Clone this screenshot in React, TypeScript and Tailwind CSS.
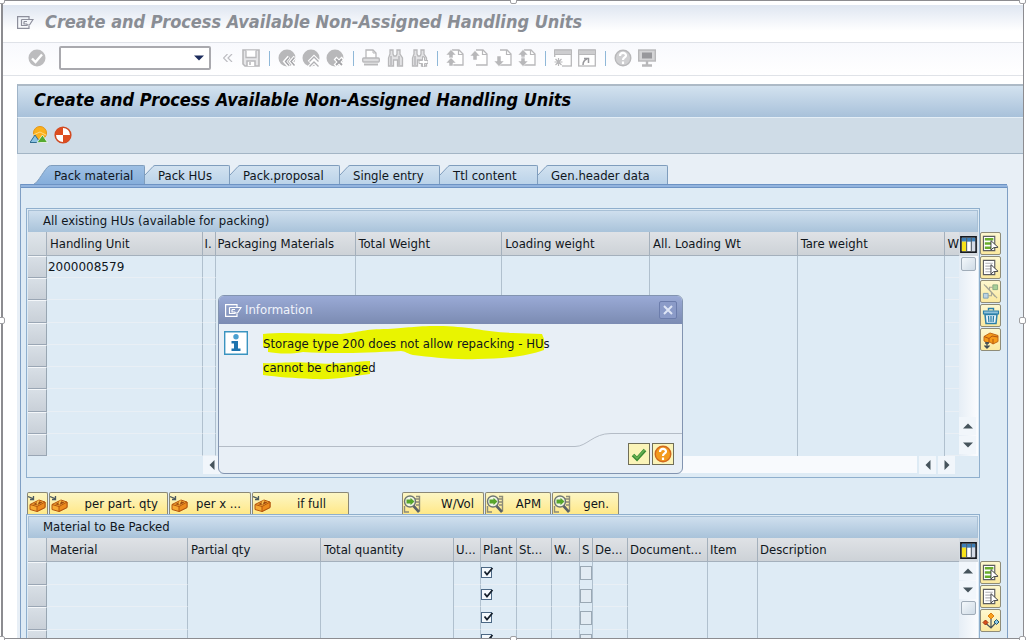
import { ReactNode } from "react";
import clsx from "clsx";

const TABS = [
  { name: "Pack material", width: "w-[111px]" },
  { name: "Pack HUs", width: "w-[85px]" },
  { name: "Pack.proposal", width: "w-[110px]" },
  { name: "Single entry", width: "w-[100px]" },
  { name: "Ttl content", width: "w-[98px]" },
  { name: "Gen.header data", width: "w-[130px]" },
];

const HU_COLUMNS = [
  { name: "Handling Unit", width: "w-[156px]", lines: true },
  { name: "I.", width: "w-[13px]", tight: true, lines: true },
  { name: "Packaging Materials", width: "w-[140px]", tight: true },
  { name: "Total Weight", width: "w-[147px]" },
  { name: "Loading weight", width: "w-[148px]" },
  { name: "All. Loading Wt", width: "w-[148px]" },
  { name: "Tare weight", width: "w-[148px]" },
  { name: "W", width: "w-auto", tight: true, lines: true },
];

const MATERIAL_COLUMNS = [
  { name: "Material", width: "w-[141px]", lines: true },
  { name: "Partial qty", width: "w-[133px]" },
  { name: "Total quantity", width: "w-[133px]" },
  { name: "U...", width: "w-[27px]", tight: true, lines: true },
  { name: "Plant", width: "w-[36px]", tight: true, lines: true },
  { name: "St...", width: "w-[35px]", tight: true, lines: true },
  { name: "W..", width: "w-[28px]", tight: true, lines: true },
  { name: "S", width: "w-[13px]", tight: true },
  { name: "De...", width: "w-[35px]", tight: true, lines: true },
  { name: "Document...", width: "w-[80px]", tight: true },
  { name: "Item", width: "w-[50px]", tight: true },
  { name: "Description", width: "w-auto", tight: true },
];

interface Column {
  name: string;
  width: string;
  tight?: boolean;
  lines?: boolean;
}

function Icon({ children, size = "size-[18px]" }: { children: ReactNode; size?: string }) {
  return (
    <svg viewBox="0 0 18 18" className={clsx("shrink-0", size)} fill="none" aria-hidden="true">
      {children}
    </svg>
  );
}

/* ---- grey icons of the system toolbar ---- */

const GREY = "#b8b8ba";

function CheckCircle() {
  return (
    <Icon>
      <circle cx="9" cy="9" r="8.5" fill="#bcbcbe" />
      <path d="M4 9.5l3.5 3.5L14 5.5" stroke="#fff" strokeWidth="2.4" />
    </Icon>
  );
}

function SaveIcon() {
  return (
    <Icon>
      <path d="M1 1h16v16H3l-2-2z" fill="#e6e6e8" stroke={GREY} strokeWidth="1.6" />
      <path d="M4 1.5v7h10v-7" fill="#fff" stroke={GREY} strokeWidth="1.3" />
      <path d="M5 17v-5h8v5M8 13v3" fill="#fff" stroke={GREY} strokeWidth="1.5" />
    </Icon>
  );
}

function BackIcon() {
  return (
    <Icon>
      <circle cx="9" cy="9" r="8.5" fill={GREY} />
      <path d="M11 8l-4 4.5 4 4.5M17 8l-4 4.5 4 4.5" stroke="#fff" strokeWidth="3.6" />
      <path d="M11 8.5L7.5 12.5l3.5 4M16.5 8.5L13 12.5l3.5 4" stroke="#a4a4a8" strokeWidth="1.4" />
    </Icon>
  );
}

function ExitIcon() {
  return (
    <Icon>
      <circle cx="9" cy="9" r="8.5" fill={GREY} />
      <path d="M7 13l5-5 5 5M7 18l5-5 5 5" stroke="#fff" strokeWidth="3.5" />
      <path d="M7.5 12.5L12 8l4.5 4.5M7.5 17.5L12 13l4.5 4.5" stroke="#b0b0b4" strokeWidth="1.3" />
    </Icon>
  );
}

function CancelIcon() {
  return (
    <Icon>
      <circle cx="9" cy="9" r="8.5" fill={GREY} />
      <path d="M9 9l8 8M17 9l-8 8" stroke="#fff" strokeWidth="4" />
      <path d="M10 10l6 6M16 10l-6 6" stroke="#a4a4a8" strokeWidth="1.8" />
    </Icon>
  );
}

function PrintIcon() {
  return (
    <Icon>
      <path d="M4 9V1h7l3 3v5" fill="#fff" stroke={GREY} strokeWidth="1.3" />
      <path d="M11 1v3h3" stroke={GREY} />
      <rect x="0.7" y="9" width="16.6" height="4" rx="1" fill="#dcdcde" stroke={GREY} strokeWidth="1.3" />
      <path d="M2 15.5h14" stroke={GREY} strokeWidth="2" />
    </Icon>
  );
}

function FindIcon({ next = false }: { next?: boolean }) {
  return (
    <Icon>
      <path d="M4 1h3v4l1 2h2l1-2V1h3v4l2.500 4v8h-5v-6h-4v6h-5V9L4 5z" fill="#e2e2e4" stroke={GREY} strokeWidth="1.3" />
      <path d="M5 7v9M13 7v9" stroke={GREY} strokeWidth="1.5" />
      {next && <path d="M12.500 8v3.500H9v3h3.500V18h2v-3.500H18v-3h-3.500V8z" fill="#fff" stroke={GREY} />}
    </Icon>
  );
}

function PageIcon({ direction }: { direction: "first" | "up" | "down" | "last" }) {
  return (
    <Icon>
      <path d="M6 1h7l4 4v11H6" fill="#fff" stroke={GREY} strokeWidth="1.3" />
      <path d="M12.5 1v4.5H17" stroke={GREY} strokeWidth="1.2" />
      {direction === "up" && <path d="M0 7L5 1.500 10 7H7v4H3V7z" fill={GREY} stroke="#fff" strokeWidth="0.5" />}
      {direction === "down" && <path d="M0 12l5 5.500L10 12H7V7H3v5z" fill={GREY} stroke="#fff" strokeWidth="0.5" />}
      {direction === "first" && (
        <path d="M0 6L5 0.500 10 6H7v3H3V6zM0 14l5-5.500L10 14H7v3H3v-3z" fill={GREY} stroke="#fff" strokeWidth="0.5" />
      )}
      {direction === "last" && (
        <path d="M0 6L5 0.500 10 6H7v3H3V6zM0 12h3V8h4v4h3l-5 5.500z" fill={GREY} stroke="#fff" strokeWidth="0.5" />
      )}
    </Icon>
  );
}

function SessionIcon({ shortcut = false }: { shortcut?: boolean }) {
  return (
    <Icon>
      <rect x="0.7" y="1" width="16.6" height="16" fill="#fff" stroke={GREY} strokeWidth="1.3" />
      <path d="M0.5 1h17v4.5H.5z" fill="#cdcdcf" stroke={GREY} />
      {shortcut ? (
        <path d="M5 16c0-3 1-5 4-6M6 9.5h4.5V14" stroke="#98989c" strokeWidth="1.5" />
      ) : (
        <>
          <path d="M0 8h8v10H0z" fill="#fff" />
          <path d="M4.5 9v8M.5 13h8M1.5 10l6 6M7.5 10l-6 6" stroke={GREY} strokeWidth="1.2" />
        </>
      )}
    </Icon>
  );
}

function HelpIcon({ active = false }: { active?: boolean }) {
  return (
    <Icon>
      <circle cx="9" cy="9" r="7.8" fill={active ? "#f39a1e" : "#d0d0d2"} stroke={active ? "#d2691e" : GREY} strokeWidth="1.4" />
      <path d="M6 7c0-4 6-4 6-.5 0 2-3 2-3 4.5M9 12.5V15" stroke="#fff" strokeWidth="2.2" />
    </Icon>
  );
}

function MonitorIcon() {
  return (
    <Icon>
      <rect x="0.7" y="1" width="16.6" height="11" fill="#d4d4d6" stroke={GREY} strokeWidth="1.4" />
      <path d="M4 3.5h10v6H4z" fill="#98989c" />
      <path d="M9 12v4M4 16.5h10" stroke={GREY} strokeWidth="2.4" />
    </Icon>
  );
}

function WindowIcon({ className }: { className: string }) {
  return (
    <svg viewBox="0 0 17 13" className={clsx("h-[13px] w-[17px] shrink-0", className)} fill="none" stroke="currentColor" strokeWidth="1.2" aria-hidden="true">
      <path d="M12 3V.6H.6v11.8H12V10" />
      <path d="M4.5 3.5h7M4.5 3.5v6h5c1 0 1-1.5 0-1.5M7 5.5h3M7 5.5V8h3M11 3.500h5L12.5 9H9.5" />
    </svg>
  );
}

/* ---- coloured icons ---- */

function SelectIcon({ all = false }: { all?: boolean }) {
  return (
    <Icon size="size-[17px]">
      <path d="M1.5 1.5h12v15h-12z" fill="#fff" stroke="#5d5d60" strokeWidth="1.2" />
      {all ? (
        <path d="M3 4.500h9M3 9h9M3 13.5h9" stroke="#69ad2c" strokeWidth="2.8" />
      ) : (
        <path d="M3.5 4.5h8M3.5 7.5h8M3.5 10.5h6M3.5 13.5h6" stroke="#b4b4b8" strokeWidth="1.3" />
      )}
      <path d="M9.5 6v10l2.5-2.5L17 13z" fill="#fff" stroke="#3c3c40" />
    </Icon>
  );
}

function UnlinkIcon() {
  return (
    <Icon size="size-[17px]">
      <path d="M1.5 11h5v5h-5z" fill="#bcd4e2" stroke="#7d9fb4" />
      <path d="M11.5 2h5v5h-5z" fill="#a8d098" stroke="#86aa80" />
      <path d="M6.5 13.5H10v-3M11.5 4.5H8v3M4 3l12 13M2 1.5l12 13" stroke="#a7a795" strokeWidth="1.1" />
    </Icon>
  );
}

function TrashIcon() {
  return (
    <Icon>
      <path d="M6.5 3.5V1.5h5v2" stroke="#2c7fa8" strokeWidth="1.4" />
      <path d="M1.5 4h15v3h-15z" fill="#8fc2dc" stroke="#2c7fa8" strokeWidth="1.2" />
      <path d="M3 7.5h12l-1 9H4z" fill="#e8f4fa" stroke="#2c7fa8" strokeWidth="1.5" />
      <path d="M6.5 9l.4 6M9 9v6M11.5 9l-.4 6" stroke="#2c7fa8" strokeWidth="1.3" />
    </Icon>
  );
}

function UnpackIcon() {
  return (
    <Icon>
      <path d="M2 5.500L8 2l8 2.500v6L11 13l-3-2-2 1-4-2z" fill="#f59a1a" stroke="#c46a16" />
      <path d="M2 5.500l5 2 3-2.500 6 1M7 7.500V11M11 8v5" stroke="#b4560f" />
      <path d="M5 11v6M2.5 14.5L5 17l2.500-2.500M3 12h4" stroke="#3f4a52" strokeWidth="1.4" />
    </Icon>
  );
}

function PackIcon() {
  return (
    <Icon>
      <path d="M2 9.500L11 5l6 2v5.500L9 16.500 2 14.500z" fill="#f6a832" stroke="#b4560f" />
      <path d="M2 9.500l7 2 8-4.500v5.500L9 16.500v-5" fill="#ec8a1c" stroke="#b4560f" />
      <path d="M5 9.300l6-3 3.500 1.200L9 10.300z" fill="#9c4a10" />
      <path d="M10.500 5.500L9 9.500" stroke="#f9c050" strokeWidth="1.500" />
      <path d="M0 1.500l5 2M5.500 1v3.500H2" stroke="#4b5a60" strokeWidth="1.3" />
    </Icon>
  );
}

function ZoomIcon() {
  return (
    <Icon>
      <path d="M13 1.5h3.5v15M1.5 11v6H6M12 4h4M12 7h4M13 10h3" stroke="#8c8b78" strokeWidth="1.4" />
      <circle cx="7" cy="6.5" r="5.5" fill="#f2f7e6" stroke="#6f7672" strokeWidth="1.4" />
      <path d="M3.5 4.5h4V2.800l4 3.700-4 3.700V8.5h-4z" fill="#58a52c" />
      <path d="M10.5 11l5.5 6" stroke="#5a6266" strokeWidth="2.6" />
    </Icon>
  );
}

function HierarchyIcon() {
  return (
    <Icon>
      <path d="M9 7v9M3.5 11L9 16l5.5-6" stroke="#46525a" strokeWidth="1.2" />
      <path d="M9 1l3 3-3 3-3-3z" fill="#f9a11c" stroke="#d97c12" />
      <path d="M3.5 8L6 10.5 3.5 13 1 10.500z" fill="#d94f1c" stroke="#9c3510" />
      <path d="M14.5 7.5L17 10l-2.5 2.5L12 10z" fill="#8cc8e6" stroke="#24586e" />
    </Icon>
  );
}

function ConfigIcon() {
  return (
    <Icon size="size-[17px]">
      <path d="M1 1h16v16H1z" fill="#fff" stroke="#161a20" strokeWidth="1.8" />
      <path d="M2 2h14v4H2z" fill="#3c7fb8" />
      <path d="M2 6h5v10H2z" fill="#f8e21a" />
      <path d="M12 6h4v10h-4z" fill="#d4dbe6" />
      <path d="M7 2v14M12 2v14" stroke="#54606c" strokeWidth="1.2" />
    </Icon>
  );
}

const ARROWS = {
  up: "M0 7.5L5 2.5l5 5z",
  down: "M0 2.5h10L5 7.5z",
  left: "M7.5 0v10L2.5 5z",
  right: "M2.5 0v10l5-5z",
};

function ScrollButton({ direction }: { direction: keyof typeof ARROWS }) {
  return (
    <button aria-label={`Scroll ${direction}`} className="flex h-[18px] w-[17px] shrink-0 items-center justify-center bg-[#f1f6fb]">
      <svg viewBox="0 0 10 10" className="size-[10px]" aria-hidden="true">
        <path d={ARROWS[direction]} fill="#46545c" />
      </svg>
    </button>
  );
}

function ScrollThumb() {
  return <div className="mx-auto h-[14px] w-[15px] shrink-0 rounded-xs border border-[#a0acb8] bg-linear-to-br from-[#f4f8fb] to-[#cfdbe6]" />;
}

function ToolButton({ label, children }: { label: string; children: ReactNode }) {
  return (
    <button aria-label={label} className="shrink-0">
      {children}
    </button>
  );
}

function Separator() {
  return (
    <div className="flex w-[6px] shrink-0 justify-center">
      <div className="h-[15px] w-px bg-[#8fb8d8]" />
    </div>
  );
}

function SideButton({ label, children }: { label: string; children: ReactNode }) {
  return (
    <button
      aria-label={label}
      className="flex h-[23px] w-[21px] items-center justify-center rounded-xs border border-[#8f8c78] bg-linear-to-b from-[#fdf8cf] to-[#fbe9a0]"
    >
      {children}
    </button>
  );
}

function ActionButton({ icon, label, className }: { icon: ReactNode; label?: string; className: string }) {
  return (
    <button
      aria-label={label ? undefined : "Pack"}
      className={clsx(
        "flex h-[22px] items-center justify-between rounded-t-xs border border-b-0 border-[#8b8876] bg-linear-to-b from-[#fcf6c4] to-[#ffe887] whitespace-nowrap",
        className
      )}
    >
      {icon}
      {label && <span>{label}</span>}
    </button>
  );
}

function Tab({ name, width, active }: { name: string; width: string; active: boolean }) {
  const id = active ? "tab-on" : "tab-off";
  return (
    <button role="tab" aria-selected={active} className={clsx("flex h-[19px] shrink-0", width)}>
      <svg viewBox={active ? "0 0 18 19" : "0 0 10 19"} className={clsx("h-[19px] shrink-0", active ? "w-[18px]" : "w-[10px]")} fill="none" aria-hidden="true">
        <defs>
          <linearGradient id={id} x1="0" y1="0" x2="0" y2="1">
            <stop offset="0" stopColor={active ? "#9dbfe4" : "#d2e2f0"} />
            <stop offset="1" stopColor={active ? "#86aedb" : "#bbd3e9"} />
          </linearGradient>
        </defs>
        <path d={active ? "M0 19C4 18 11 3 15 1Q16 .5 18 .5V19z" : "M0 19V10L8 1.5Q9 .5 10 .5V19z"} fill={`url(#${id})`} />
        <path d={active ? "M0 19C4 18 11 3 15 1Q16 .5 18 .5" : "M0 10L8 1.5Q9 .5 10 .5"} stroke="#7f9dbd" />
      </svg>
      <span
        className={clsx(
          "h-full flex-1 rounded-tr-xs border-t border-r border-[#7f9dbd] bg-linear-to-b pt-px text-left leading-[18px] whitespace-nowrap",
          active ? "from-[#9dbfe4] to-[#86aedb] pl-[2px]" : "from-[#d2e2f0] to-[#bbd3e9] pl-[3px]"
        )}
      >
        {name}
      </span>
    </button>
  );
}

function GridTable({
  label,
  columns,
  rows,
  className,
  renderCell,
}: {
  label: string;
  columns: Column[];
  rows: number;
  className: string;
  renderCell: (column: string, row: number) => ReactNode;
}) {
  return (
    <table aria-label={label} className={clsx("min-w-0 flex-1 table-fixed border-separate border-spacing-0", className)}>
      <thead>
        <tr className="h-[24px]">
          <th aria-label="Select" className="w-[19px] border-r border-b border-[#a4b0bc] bg-linear-to-b from-[#dfe5ea] to-[#d0d7dd] p-0" />
          {columns.map((column, index) => (
            <th
              key={column.name}
              className={clsx(
                "overflow-hidden border-b border-[#a4b0bc] bg-linear-to-b from-[#dfe2e6] to-[#cdd2d7] py-0 pr-0 text-left font-normal whitespace-nowrap",
                column.width,
                column.tight ? "pl-[2px]" : "pl-[3px]",
                index < columns.length - 1 && "border-r"
              )}
            >
              {column.name}
            </th>
          ))}
        </tr>
      </thead>
      <tbody>
        {[...Array(rows)].map((_, row) => (
          <tr key={row} className="h-[22px]">
            <td className="border-t border-r border-b border-t-[#f4f7fa] border-r-[#98a6b2] border-b-[#9aa6b4] bg-linear-to-b from-[#d8dfe6] to-[#c9d0d8] p-0" />
            {columns.map((column, index) => (
              <td
                key={column.name}
                className={clsx(
                  "border-[#b0c0ce] p-0",
                  index < columns.length - 1 && "border-r",
                  column.lines && "border-b border-b-[#e9eff5]"
                )}
              >
                {renderCell(column.name, row)}
              </td>
            ))}
          </tr>
        ))}
      </tbody>
    </table>
  );
}

function GroupBox({ title, className, children }: { title: string; className?: string; children: ReactNode }) {
  return (
    <section className={clsx("min-w-0 flex-1 border border-[#8fafcd] p-px", className)}>
      <h2 className="h-[22px] border border-b-0 border-[#a8c0d6] bg-linear-to-b from-[#cfdfee] to-[#a9c3da] pl-[14px] leading-[20px]">
        {title}
      </h2>
      {children}
    </section>
  );
}

function PlantCheck({ row }: { row: number }) {
  return (
    <label className="relative block size-[12px]">
      <input
        type="checkbox"
        defaultChecked
        aria-label={`Plant, row ${row + 1}`}
        className="peer block size-[11px] appearance-none border border-[#4c6884] bg-[#f4f9fd]"
      />
      <svg viewBox="0 0 12 12" className="absolute top-0 left-px hidden size-[12px] peer-checked:block" fill="none" aria-hidden="true">
        <path d="M2.5 4.5L5 7.5 10.5 1" stroke="#16202c" strokeWidth="1.8" />
      </svg>
    </label>
  );
}

function InformationDialog() {
  return (
    <div
      role="dialog"
      aria-labelledby="dialog-title"
      className="absolute top-[295px] left-[218px] flex h-[179px] w-[465px] flex-col overflow-hidden rounded-md border border-[#8294b0] bg-[#e8eff6]"
    >
      <div className="flex h-[28px] shrink-0 items-center gap-[3px] bg-linear-to-b from-[#9aaad6] to-[#7b8bb2] pr-[5px] pl-[6px] text-white">
        <WindowIcon className="text-white" />
        <h2 id="dialog-title" className="flex-1 text-[#f0f3fb]">Information</h2>
        <button aria-label="Close" className="flex size-[18px] items-center justify-center rounded-xs border border-[#6c7dac] bg-[#8b9bc8]">
          <svg viewBox="0 0 10 10" className="size-[10px]" aria-hidden="true">
            <path d="M1 1l8 8M9 1L1 9" stroke="#dfe6f6" strokeWidth="2" />
          </svg>
        </button>
      </div>
      <div className="flex flex-1 gap-[15px] pt-[7px] pl-[5px]">
        <svg viewBox="0 0 24 24" className="size-[24px] shrink-0" aria-hidden="true">
          <path d="M.7.7h22.600v22.600H.7z" fill="#fff" stroke="#3a94c0" strokeWidth="1.4" />
          <circle cx="12" cy="5.8" r="2.7" fill="#4aa0d0" />
          <path d="M7.5 10h6.5v7.5h2.5V20h-9v-2.5H10v-5H7.5z" fill="#1f74ae" />
        </svg>
        <div className="relative">
          <svg viewBox="0 0 282 56" className="absolute top-[-6px] left-0 h-[56px] w-[282px]" aria-hidden="true">
            <path
              d="M0 9C20 7 50 9 78 9C98 7 100 4 125 4C145 3 150 1 175 1C205 1 222 7 250 8L279 9L281 14L281 25C265 31 240 34 215 34C185 35 170 32 150 30C145 29 142 26 138 26C100 28 70 29 40 27C25 30 12 28 5 27L5 23L0 22Z"
              fill="#e9f400"
            />
            <path d="M0 38C15 39 25 36 50 38C75 40 85 37 107 36L107 49C90 51 75 55 50 54C30 53 15 52 0 50Z" fill="#e9f400" />
          </svg>
          <p className="relative pt-px leading-[24px] whitespace-nowrap">
            Storage type 200 does not allow repacking - HUs
            <br />
            cannot be changed
          </p>
        </div>
      </div>
      <div className="flex h-[40px] shrink-0">
        <div className="mt-[13px] flex-1 border-t border-[#b4bcc6]" />
        <svg viewBox="0 0 36 14" className="h-[14px] w-[36px] shrink-0" fill="none" aria-hidden="true">
          <path d="M0 13.5C12 13.5 18 .5 36 .5" stroke="#b4bcc6" />
        </svg>
        <div className="flex gap-[2px] border-t border-[#b4bcc6] pt-[9px] pr-[8px] pl-[17px]">
          <button aria-label="Continue" className="flex size-[22px] items-center justify-center border border-[#706e58] bg-[#fbf4b8]">
            <svg viewBox="0 0 16 16" className="size-[16px]" fill="none" aria-hidden="true">
              <path d="M2 9l4 4L14 4" stroke="#3b8a34" strokeWidth="3.6" />
              <path d="M2.5 9L6 12.3 13.5 4" stroke="#66b052" strokeWidth="1.6" />
            </svg>
          </button>
          <button aria-label="Help" className="flex size-[22px] items-center justify-center border border-[#706e58] bg-[#fbf4b8]">
            <HelpIcon active />
          </button>
        </div>
      </div>
    </div>
  );
}

function Handle({ className }: { className: string }) {
  return <div className={clsx("absolute size-[7px] rounded-xs border border-[#a0a0a4] bg-white", className)} />;
}

export default function App() {
  return (
    <div className="relative h-screen overflow-hidden bg-white pr-[3px] pb-px pl-px font-['DejaVu_Sans_Condensed','DejaVu_Sans',sans-serif] text-[13px] leading-[16px] text-[#10161c]">
      <div className="flex h-full flex-col overflow-hidden border-y border-r border-l-2 border-[#8c8c90] pt-[4px]">
        <header className="flex h-[38px] shrink-0 items-center gap-[11px] border-b border-[#dfe2e8] bg-linear-to-b from-[#dfe6f1] to-white to-70% pb-[3px] pl-[14px]">
          <WindowIcon className="text-[#8d8f9c]" />
          <h1 className="text-[18px] leading-[24px] font-bold whitespace-nowrap text-[#898d94] italic">
            Create and Process Available Non-Assigned Handling Units
          </h1>
        </header>

        <div className="flex h-[33px] shrink-0 items-center gap-[6px] border-b border-[#e0e3e8] bg-linear-to-b from-[#f8f9fd] to-white pb-[2px] pl-[25px]">
          <ToolButton label="Enter"><CheckCircle /></ToolButton>
          <div className="relative mr-[3px] ml-[7px] w-[152px]">
            <input aria-label="Command" className="block h-[24px] w-full rounded-xs border-2 border-[#a9a9ae] bg-white px-1" />
            <svg viewBox="0 0 10 6" className="absolute top-[9px] right-[7px] h-[6px] w-[10px]" aria-hidden="true">
              <path d="M0 .5h10L5 5.5z" fill="#1c2c5c" />
            </svg>
          </div>
          <button aria-label="Collapse" className="flex w-[16px] shrink-0 justify-center text-[#bdbdc2]">
            <svg viewBox="0 0 10 8" className="h-[8px] w-[10px]" fill="none" stroke="currentColor" aria-hidden="true">
              <path d="M4.5 0l-4 4 4 4M9 0L5 4l4 4" strokeWidth="1.2" />
            </svg>
          </button>
          <ToolButton label="Save"><SaveIcon /></ToolButton>
          <Separator />
          <ToolButton label="Back"><BackIcon /></ToolButton>
          <ToolButton label="Exit"><ExitIcon /></ToolButton>
          <ToolButton label="Cancel"><CancelIcon /></ToolButton>
          <Separator />
          <ToolButton label="Print"><PrintIcon /></ToolButton>
          <ToolButton label="Find"><FindIcon /></ToolButton>
          <ToolButton label="Find next"><FindIcon next /></ToolButton>
          <Separator />
          <ToolButton label="First page"><PageIcon direction="first" /></ToolButton>
          <ToolButton label="Previous page"><PageIcon direction="up" /></ToolButton>
          <ToolButton label="Next page"><PageIcon direction="down" /></ToolButton>
          <ToolButton label="Last page"><PageIcon direction="last" /></ToolButton>
          <Separator />
          <ToolButton label="New session"><SessionIcon /></ToolButton>
          <ToolButton label="Create shortcut"><SessionIcon shortcut /></ToolButton>
          <Separator />
          <ToolButton label="Help"><HelpIcon /></ToolButton>
          <ToolButton label="Customize layout"><MonitorIcon /></ToolButton>
        </div>

        <main className="mt-[8px] ml-[14px] flex min-h-0 flex-1 flex-col bg-[#e8eff6]">
          <div className="flex h-[34px] shrink-0 items-center border-t-2 border-b border-l border-t-[#adbac6] border-b-[#e4eef6] border-l-[#9fb4c8] bg-linear-to-b from-[#d3e2ef] to-[#a8c1da] pb-[3px] pl-[16px]">
            <h2 className="text-[18px] leading-[24px] font-bold whitespace-nowrap text-black italic">
              Create and Process Available Non-Assigned Handling Units
            </h2>
          </div>
          <div className="flex h-[36px] shrink-0 items-center gap-[6px] border-b border-l border-b-[#a3b5c5] border-l-[#9fb4c8] bg-[#cfdce7] pb-[2px] pl-[12px]">
            <ToolButton label="Header data">
              <Icon>
                <circle cx="10" cy="7" r="6.5" fill="#fbb01c" stroke="#e59512" />
                <path d="M0 16.5L5 9l5 7.5z" fill="#8cc2e2" stroke="#2f6c90" />
                <path d="M7 16.5L12.5 9l5 7.500z" fill="#55aa30" stroke="#fff" strokeWidth="0.7" />
                <path d="M3 9l7-3 6 3" stroke="#fde3a0" strokeWidth="0.8" />
              </Icon>
            </ToolButton>
            <ToolButton label="Overview">
              <Icon>
                <circle cx="9" cy="9" r="7.8" fill="#fff" stroke="#cf4a22" strokeWidth="1.6" />
                <path d="M9 9V1.200A7.800 7.800 0 0 0 1.200 9zM9 9v7.800A7.800 7.800 0 0 0 16.800 9z" fill="#dd4d20" />
              </Icon>
            </ToolButton>
          </div>

          <div role="tablist" className="mt-[11px] flex shrink-0 pl-[17px]">
            {TABS.map((tab, index) => (
              <Tab key={tab.name} name={tab.name} width={tab.width} active={index === 0} />
            ))}
          </div>

          <div className="mr-[15px] ml-[3px] flex min-h-0 flex-1 flex-col rounded-tr-sm border-x border-[#7f9fc4] bg-[#deebf5]">
            <div className="h-[4px] shrink-0 border-y border-[#6d93c4] bg-[#93b4de]" />

            <div className="flex shrink-0 pt-[20px] pr-[6px] pl-[5px]">
              <GroupBox title="All existing HUs (available for packing)">
                <div className="flex">
                  <GridTable
                    label="Existing handling units"
                    columns={HU_COLUMNS}
                    rows={9}
                    className="h-[224px]"
                    renderCell={(column, row) =>
                      column === "Handling Unit" && row === 0 ? (
                        <span className="block pl-px font-['DejaVu_Sans',sans-serif] text-[12px] leading-[20px]">2000008579</span>
                      ) : null
                    }
                  />
                  <div className="flex w-[19px] shrink-0 flex-col bg-linear-to-r from-[#e6eef6] to-[#fbfcfe]">
                    <button aria-label="Table settings" className="flex h-[24px] shrink-0 items-center justify-center bg-[#d5dbe1]">
                      <ConfigIcon />
                    </button>
                    <div className="h-px" />
                    <ScrollThumb />
                    <div className="flex-1" />
                    <div className="flex flex-col gap-px pb-[2px]">
                      <ScrollButton direction="up" />
                      <ScrollButton direction="down" />
                    </div>
                  </div>
                </div>
                <div className="flex h-[20px] gap-[2px] pr-[23px] pl-[175px]">
                  <ScrollButton direction="left" />
                  <div className="h-[17px] flex-1 bg-[#f8fafd] pl-[23px]">
                    <div className="h-[18px] w-[20px] rounded-xs border border-[#a0acb8] bg-[#d3dee8]" />
                  </div>
                  <ScrollButton direction="left" />
                  <ScrollButton direction="right" />
                </div>
              </GroupBox>
              <div className="flex w-[21px] shrink-0 flex-col gap-px pt-[24px]">
                <SideButton label="Select all"><SelectIcon all /></SideButton>
                <SideButton label="Deselect all"><SelectIcon /></SideButton>
                <SideButton label="Remove assignment"><UnlinkIcon /></SideButton>
                <SideButton label="Delete"><TrashIcon /></SideButton>
                <SideButton label="Empty"><UnpackIcon /></SideButton>
              </div>
            </div>

            <div className="mt-[14px] flex shrink-0 gap-px pl-[6px]">
              <ActionButton icon={<PackIcon />} className="w-[21px]" />
              <ActionButton icon={<PackIcon />} label="per part. qty" className="w-[119px] pr-[9px]" />
              <ActionButton icon={<PackIcon />} label="per x ..." className="w-[82px] pr-[9px]" />
              <ActionButton icon={<PackIcon />} label="if full" className="mr-[52px] w-[97px] pr-[22px]" />
              <ActionButton icon={<ZoomIcon />} label="W/Vol" className="w-[82px] pr-[9px]" />
              <ActionButton icon={<ZoomIcon />} label="APM" className="w-[66px] pr-[9px]" />
              <ActionButton icon={<ZoomIcon />} label="gen." className="w-[67px] pr-[9px]" />
            </div>

            <div className="flex min-h-0 flex-1 pr-[6px] pl-[5px]">
              <GroupBox title="Material to Be Packed" className="border-b-0">
                <div className="flex">
                  <GridTable
                    label="Material to be packed"
                    columns={MATERIAL_COLUMNS}
                    rows={4}
                    className="h-[114px]"
                    renderCell={(column, row) => {
                      if (column === "Plant") return <PlantCheck row={row} />;
                      if (column === "S")
                        return (
                          <input
                            type="checkbox"
                            aria-label={`S, row ${row + 1}`}
                            className="block h-[14px] w-[12px] appearance-none border border-[#9aa8b4] bg-[#e2ebf3]"
                          />
                        );
                      return null;
                    }}
                  />
                  <div className="flex w-[19px] shrink-0 flex-col bg-linear-to-r from-[#e6eef6] to-[#fbfcfe]">
                    <button aria-label="Table settings" className="flex h-[24px] shrink-0 items-center justify-center bg-[#d5dbe1]">
                      <ConfigIcon />
                    </button>
                    <div className="flex flex-col gap-px pb-[2px]">
                      <ScrollButton direction="up" />
                      <ScrollButton direction="down" />
                    </div>
                    <ScrollThumb />
                  </div>
                </div>
              </GroupBox>
              <div className="flex w-[21px] shrink-0 flex-col gap-px pt-[47px]">
                <SideButton label="Select all"><SelectIcon all /></SideButton>
                <SideButton label="Deselect all"><SelectIcon /></SideButton>
                <SideButton label="Hierarchy"><HierarchyIcon /></SideButton>
              </div>
            </div>
          </div>
        </main>
      </div>

      <InformationDialog />

      <Handle className="top-[-3px] left-[-2px]" />
      <Handle className="top-[-3px] left-[510px]" />
      <Handle className="top-[-3px] right-[1px]" />
      <Handle className="top-[317px] left-[-2px]" />
      <Handle className="top-[317px] right-[1px]" />
      <Handle className="bottom-[-3px] left-[-2px]" />
      <Handle className="bottom-[-3px] left-[510px]" />
      <Handle className="right-[1px] bottom-[-3px]" />
    </div>
  );
}
